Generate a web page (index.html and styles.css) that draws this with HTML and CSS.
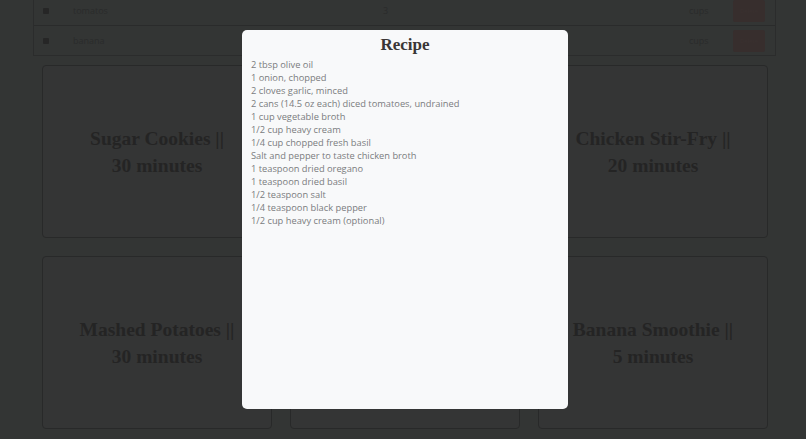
FILE: index.html
```html
<!DOCTYPE html>
<html>
<head>
<meta charset="utf-8">
<link rel="stylesheet" href="styles.css">
</head>
<body>
<main class="page">
  <div class="table">
    <div class="row">
      <span class="check"></span>
      <span class="name">tomatos</span>
      <span class="qty">3</span>
      <span class="unit">cups</span>
      <span class="del">Delete</span>
    </div>
    <div class="row">
      <span class="check"></span>
      <span class="name">banana</span>
      <span class="qty">3</span>
      <span class="unit">cups</span>
      <span class="del">Delete</span>
    </div>
  </div>
  <div class="cards">
    <div class="card"><h2>Sugar Cookies ||<br>30 minutes</h2></div>
    <div class="card"><h2>Tomato Soup ||<br>45 minutes</h2></div>
    <div class="card"><h2>Chicken Stir-Fry ||<br>20 minutes</h2></div>
    <div class="card"><h2>Mashed Potatoes ||<br>30 minutes</h2></div>
    <div class="card"><h2>Pancakes ||<br>15 minutes</h2></div>
    <div class="card"><h2>Banana Smoothie ||<br>5 minutes</h2></div>
  </div>
</main>
<div class="overlay">
  <div class="modal">
    <h1 class="modal-title">Recipe</h1>
    <ul class="ingredients">
      <li>2 tbsp olive oil</li>
      <li>1 onion, chopped</li>
      <li>2 cloves garlic, minced</li>
      <li>2 cans (14.5 oz each) diced tomatoes, undrained</li>
      <li>1 cup vegetable broth</li>
      <li>1/2 cup heavy cream</li>
      <li>1/4 cup chopped fresh basil</li>
      <li>Salt and pepper to taste chicken broth</li>
      <li>1 teaspoon dried oregano</li>
      <li>1 teaspoon dried basil</li>
      <li>1/2 teaspoon salt</li>
      <li>1/4 teaspoon black pepper</li>
      <li>1/2 cup heavy cream (optional)</li>
    </ul>
  </div>
</div>
</body>
</html>
```
FILE: styles.css
```css
html, body {
  margin: 0;
  padding: 0;
  height: 100%;
  overflow: hidden;
  background: #333534;
  font-family: "Open Sans", "Liberation Sans", sans-serif;
}
.page {
  padding: 0 30px 0 33px;
}
.table {
  margin-top: -5px;
  width: 743px;
  border: 1px solid #2b2c2c;
  box-sizing: border-box;
}
.row {
  display: flex;
  align-items: center;
  height: 29px;
  font-size: 9px;
  color: #2a2b2b;
}
.row + .row {
  border-top: 1px solid #2a2b2b;
}
.check {
  width: 6px;
  height: 6px;
  margin-left: 9px;
  background: #262626;
  border-radius: 1px;
}
.name {
  margin-left: 24px;
  width: 310px;
}
.qty {
  width: 306px;
}
.unit {
  width: 44px;
}
.del {
  width: 32px;
  height: 22px;
  background: #372e2d;
  border-radius: 2px;
  color: #3a3130;
  font-size: 6px;
  display: flex;
  align-items: center;
  justify-content: center;
}
.cards {
  display: grid;
  grid-template-columns: repeat(3, 230px);
  gap: 18px;
  margin: 9px 0 0 9px;
}
.card {
  height: 173px;
  box-sizing: border-box;
  border: 1px solid #282929;
  border-radius: 4px;
  background: #343535;
  display: flex;
  align-items: center;
  justify-content: center;
  text-align: center;
}
.card h2 {
  margin: 0;
  font-family: "Liberation Serif", "DejaVu Serif", serif;
  font-weight: bold;
  font-size: 19.5px;
  line-height: 27px;
  color: #242424;
}
.overlay {
  position: fixed;
  inset: 0;
  display: flex;
  align-items: center;
  justify-content: center;
  padding-left: 4px;
}
.modal {
  width: 326px;
  height: 379px;
  box-sizing: border-box;
  background: #f8f9fa;
  border-radius: 5px;
  padding: 4px 9px;
}
.modal-title {
  margin: 0 0 2px;
  text-align: center;
  font-family: "Liberation Serif", "DejaVu Serif", serif;
  font-weight: bold;
  font-size: 17px;
  line-height: 22px;
  color: #3a3636;
}
.ingredients {
  list-style: none;
  margin: 0;
  padding: 0;
  font-size: 9.3px;
  line-height: 13px;
  color: #7a7c7e;
}
```
